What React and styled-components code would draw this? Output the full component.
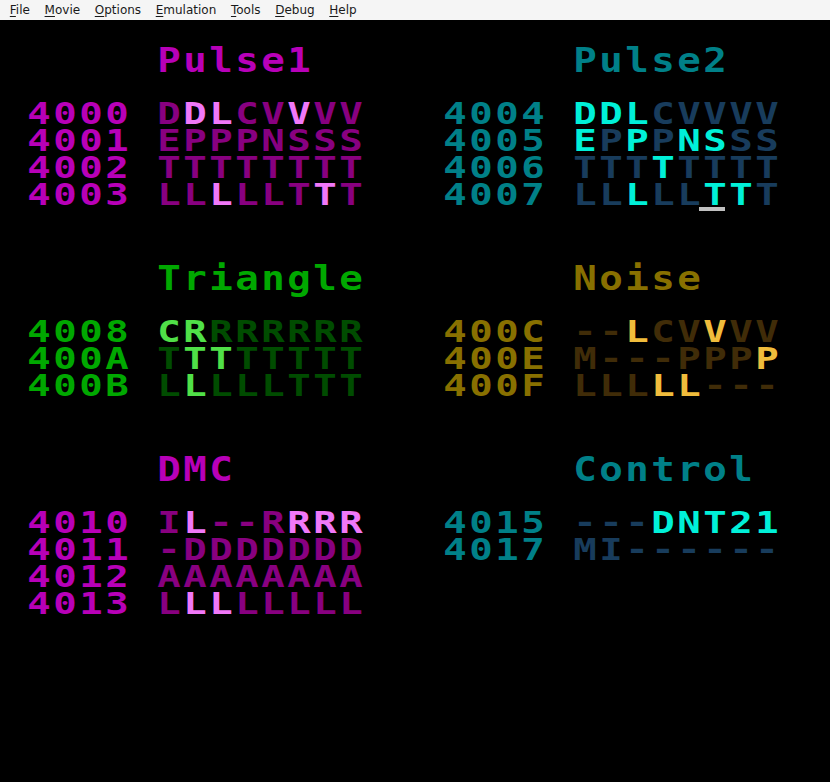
import React from "react";
import styled, { createGlobalStyle } from "styled-components";

const GlobalStyle = createGlobalStyle`
  html, body {
    margin: 0;
    padding: 0;
    background: #000;
  }
  #root {
    min-height: 782px;
  }
`;

const palette = {
  pink: { base: "#b800b8", on: "#f078f8", off: "#880080" },
  teal: { base: "#008088", on: "#00f0d8", off: "#183c5c" },
  green: { base: "#00a800", on: "#50e048", off: "#004c00" },
  gold: { base: "#887000", on: "#f0bc3c", off: "#402c08" },
};

const channels = [
  {
    title: "Pulse1",
    color: "pink",
    rows: [
      ["4000", "DDLCVVVV", "01100100"],
      ["4001", "EPPPNSSS", "00000000"],
      ["4002", "TTTTTTTT", "00000000"],
      ["4003", "LLLLLTTT", "00100010"],
    ],
  },
  {
    title: "Pulse2",
    color: "teal",
    rows: [
      ["4004", "DDLCVVVV", "11100000"],
      ["4005", "EPPPNSSS", "10101100"],
      ["4006", "TTTTTTTT", "00010000"],
      ["4007", "LLLLLTTT", "00100110"],
    ],
    cursor: [3, 5],
  },
  {
    title: "Triangle",
    color: "green",
    rows: [
      ["4008", "CRRRRRRR", "11000000"],
      ["400A", "TTTTTTTT", "01100000"],
      ["400B", "LLLLLTTT", "01000000"],
    ],
  },
  {
    title: "Noise",
    color: "gold",
    rows: [
      ["400C", "--LCVVVV", "00100100"],
      ["400E", "M---PPPP", "00000001"],
      ["400F", "LLLLL---", "00011000"],
    ],
  },
  {
    title: "DMC",
    color: "pink",
    rows: [
      ["4010", "IL--RRRR", "01000111"],
      ["4011", "-DDDDDDD", "00000000"],
      ["4012", "AAAAAAAA", "00000000"],
      ["4013", "LLLLLLLL", "01100000"],
    ],
  },
  {
    title: "Control",
    color: "teal",
    rows: [
      ["4015", "---DNT21", "00011111"],
      ["4017", "MI------", "00000000"],
    ],
  },
];

const menus = ["File", "Movie", "Options", "Emulation", "Tools", "Debug", "Help"];

const Window = styled.div`
  width: 830px;
  height: 782px;
  background: #000;
  overflow: hidden;
  display: flex;
  flex-direction: column;
`;

const MenuBar = styled.div`
  height: 20px;
  flex: 0 0 20px;
  display: flex;
  align-items: center;
  padding-left: 2.5px;
  background: #f5f5f5;
  font-family: "DejaVu Sans", sans-serif;
  font-size: 12px;
  color: #1a1a1a;
`;

const MenuItem = styled.span`
  padding: 0 7.33px;
  line-height: 20px;
  u {
    text-decoration: underline;
    text-underline-offset: 2px;
  }
`;

const Board = styled.div`
  display: grid;
  grid-template-columns: 416px 386px;
  row-gap: 53px;
  padding: 23px 0 0 26px;
`;

const Section = styled.div`
  display: flex;
  flex-direction: column;
`;

const Title = styled.div`
  height: 34px;
  line-height: 34px;
  padding-left: 130px;
  margin-bottom: 23px;
  font-family: "DejaVu Sans Mono", monospace;
  font-weight: bold;
  font-size: 34px;
  color: ${(p) => p.$color};
  display: flex;
`;

const TitleChar = styled.span`
  width: 26px;
  text-align: center;
  transform: scaleX(1.15);
`;

const Row = styled.div`
  display: flex;
  height: 27px;
  line-height: 27px;
  font-family: "DejaVu Sans Mono", monospace;
  font-weight: bold;
  font-size: 30px;
`;

const Cell = styled.span`
  position: relative;
  width: 26px;
  text-align: center;
  color: ${(p) => p.$color};
  span {
    display: inline-block;
    transform: scaleX(1.3);
  }
`;

const Cursor = styled.i`
  position: absolute;
  left: -3px;
  bottom: -3px;
  width: 26px;
  height: 4px;
  background: #c0c0c0;
`;

const Glyphs = ({ text, color, mask, cursorAt }) =>
  text.split("").map((ch, i) => (
    <Cell
      key={i}
      $color={mask ? (mask[i] === "1" ? color.on : color.off) : color.base}
    >
      <span>{ch}</span>
      {cursorAt === i && <Cursor />}
    </Cell>
  ));

const Channel = ({ title, color, rows, cursor }) => {
  const c = palette[color];
  return (
    <Section>
      <Title $color={c.base}>
        {title.split("").map((ch, i) => (
          <TitleChar key={i}>{ch}</TitleChar>
        ))}
      </Title>
      {rows.map(([addr, bits, mask], r) => (
        <Row key={addr}>
          <Glyphs text={addr} color={c} />
          <Cell />
          <Glyphs
            text={bits}
            color={c}
            mask={mask}
            cursorAt={cursor && cursor[0] === r ? cursor[1] : -1}
          />
        </Row>
      ))}
    </Section>
  );
};

export default function App() {
  return (
    <Window>
      <GlobalStyle />
      <MenuBar>
        {menus.map((m) => (
          <MenuItem key={m}>
            <u>{m[0]}</u>
            {m.slice(1)}
          </MenuItem>
        ))}
      </MenuBar>
      <Board>
        {channels.map((ch) => (
          <Channel key={ch.title} {...ch} />
        ))}
      </Board>
    </Window>
  );
}
